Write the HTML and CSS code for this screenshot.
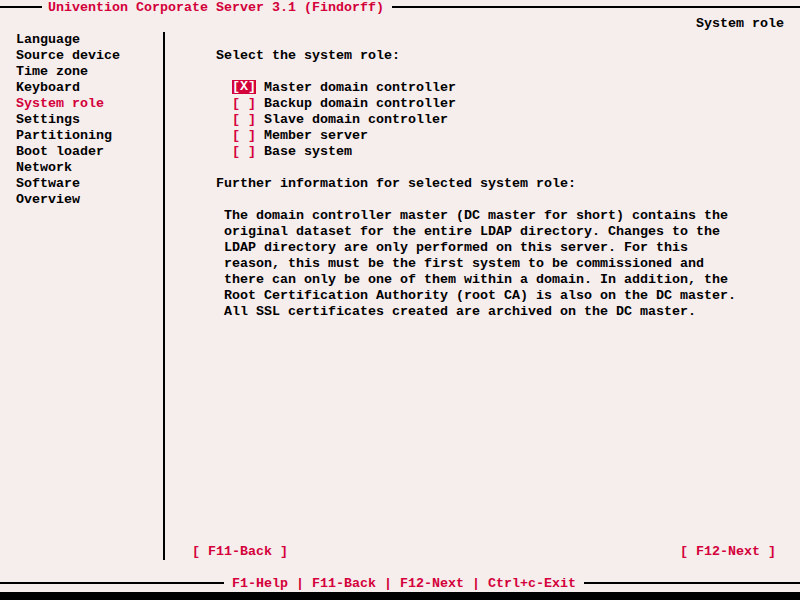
FILE: index.html
```html
<!DOCTYPE html>
<html>
<head>
<meta charset="utf-8">
<link rel="stylesheet" href="styles.css">
</head>
<body>
<div class="screen">
  <div class="titlebar">
    <span class="rule rule-left"></span>
    <span class="title">Univention Corporate Server 3.1 (Findorff)</span>
    <span class="rule rule-fill"></span>
  </div>
  <div class="subtitle">System role</div>
  <div class="main">
    <ul class="steps">
      <li>Language</li>
      <li>Source device</li>
      <li>Time zone</li>
      <li>Keyboard</li>
      <li class="active">System role</li>
      <li>Settings</li>
      <li>Partitioning</li>
      <li>Boot loader</li>
      <li>Network</li>
      <li>Software</li>
      <li>Overview</li>
    </ul>
    <div class="content">
      <div class="heading">Select the system role:</div>
      <ul class="roles">
        <li><span class="box selected">[X]</span> Master domain controller</li>
        <li><span class="box">[ ]</span> Backup domain controller</li>
        <li><span class="box">[ ]</span> Slave domain controller</li>
        <li><span class="box">[ ]</span> Member server</li>
        <li><span class="box">[ ]</span> Base system</li>
      </ul>
      <div class="heading">Further information for selected system role:</div>
      <div class="info">The domain controller master (DC master for short) contains the
original dataset for the entire LDAP directory. Changes to the
LDAP directory are only performed on this server. For this
reason, this must be the first system to be commissioned and
there can only be one of them within a domain. In addition, the
Root Certification Authority (root CA) is also on the DC master.
All SSL certificates created are archived on the DC master.</div>
      <div class="buttons">
        <span class="btn">[ F11-Back ]</span>
        <span class="btn">[ F12-Next ]</span>
      </div>
    </div>
  </div>
  <div class="spacer"></div>
  <div class="footer">
    <span class="rule rule-foot"></span>
    <span class="keys">F1-Help | F11-Back | F12-Next | Ctrl+c-Exit</span>
    <span class="rule rule-fill"></span>
  </div>
</div>
<div class="bottom"></div>
</body>
</html>
```

FILE: styles.css
```css
html, body {
  margin: 0;
  padding: 0;
  background: #000;
}
body {
  width: 800px;
  height: 600px;
  overflow: hidden;
  font-family: "Liberation Mono", "DejaVu Sans Mono", monospace;
  font-size: 13.333px;
  font-weight: bold;
  line-height: 16px;
  color: #000;
}
.screen {
  width: 800px;
  height: 592px;
  background: #f6eded;
  display: flex;
  flex-direction: column;
}
.titlebar, .footer {
  height: 16px;
  display: flex;
  align-items: flex-start;
  white-space: pre;
}
.rule {
  height: 2px;
  margin-top: 6px;
  background: #000;
}
.rule-left {
  width: 42px;
  margin-right: 6px;
}
.rule-foot {
  width: 224px;
  margin-right: 8px;
}
.rule-fill {
  flex: 1;
  margin-left: 8px;
}
.title, .keys {
  color: #d4003a;
}
.subtitle {
  height: 16px;
  text-align: right;
  padding-right: 16px;
}
.main {
  display: flex;
  height: 528px;
}
.steps {
  list-style: none;
  margin: 0;
  padding: 0 0 0 16px;
  width: 147px;
  border-right: 2px solid #000;
}
.steps li {
  height: 16px;
  white-space: pre;
}
.steps .active {
  color: #d4003a;
}
.content {
  flex: 1;
  display: flex;
  flex-direction: column;
  padding: 16px 24px 0 51px;
}
.heading {
  height: 16px;
  white-space: pre;
}
.roles {
  list-style: none;
  margin: 16px 0;
  padding: 0 0 0 16px;
}
.roles li {
  height: 16px;
  white-space: pre;
}
.box {
  color: #d4003a;
  display: inline-block;
  height: 16px;
}
.box.selected {
  background: #d4003a;
  color: #fff;
  height: 14px;
  line-height: 14px;
  vertical-align: top;
}
.info {
  margin-top: 16px;
  padding-left: 8px;
  white-space: pre;
}
.buttons {
  margin-top: auto;
  margin-left: -24px;
  display: flex;
  justify-content: space-between;
  white-space: pre;
  color: #d4003a;
  height: 16px;
}
.spacer {
  height: 16px;
}
.bottom {
  height: 8px;
  background: #000;
}
```
